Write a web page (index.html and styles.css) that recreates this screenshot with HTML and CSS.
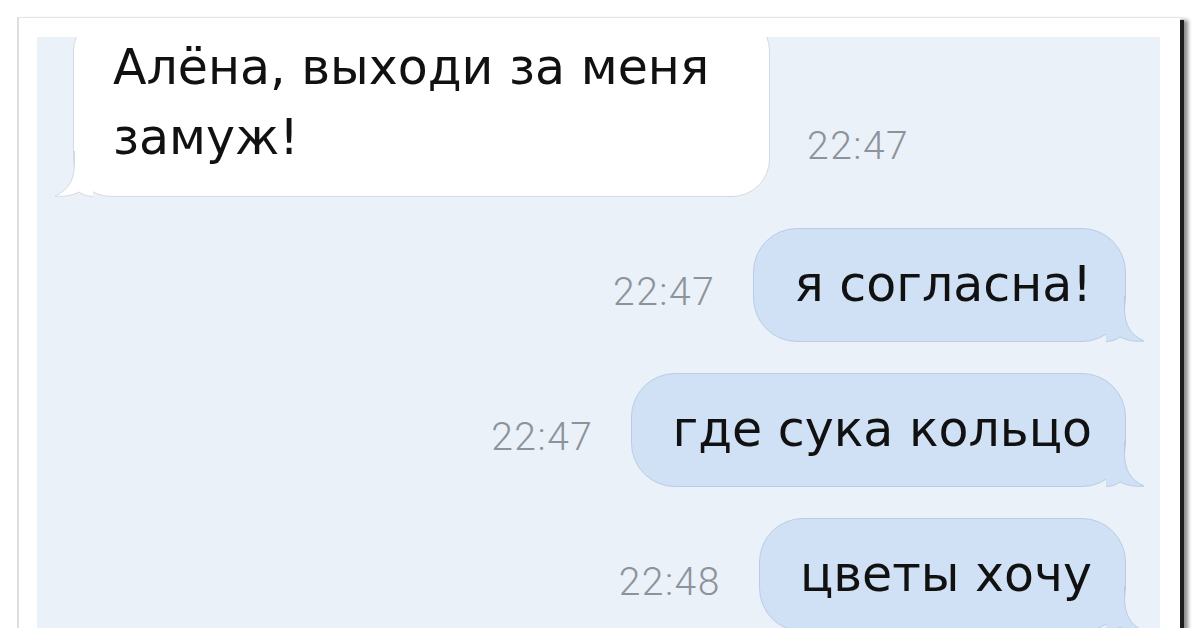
FILE: index.html
```html
<!DOCTYPE html>
<html lang="ru">
<head>
    <meta charset="UTF-8">
    <title>Переписка</title>
    <link rel="stylesheet" href="styles.css">
</head>
<body>
    <div class="frame">
        <div class="chat">
            <div class="row row-in">
                <div class="bubble bubble-in">
                    Алёна, выходи за меня замуж!
                    <svg class="tail tail-in" width="40" height="46" viewBox="0 0 40 46">
                        <path class="tail-fill" d="M0 0H18.5V12C18.5 28 24 39 38 45C29 46 21 44.5 14 41C10 44 5 45.5 0 45.5Z"/>
                        <path class="tail-line" d="M18.5 0V12C18.5 28 24 39 38 45C29 46 21 44.5 14 41C10 44 5 45.5 0 45.5"/>
                    </svg>
                </div>
                <span class="time">22:47</span>
            </div>
            <div class="row row-out">
                <span class="time">22:47</span>
                <div class="bubble bubble-out">
                    я согласна!
                    <svg class="tail tail-out" width="40" height="46" viewBox="0 0 40 46">
                        <path class="tail-fill" d="M0 0H18.5V12C18.5 28 24 39 38 45C29 46 21 44.5 14 41C10 44 5 45.5 0 45.5Z"/>
                        <path class="tail-line" d="M18.5 0V12C18.5 28 24 39 38 45C29 46 21 44.5 14 41C10 44 5 45.5 0 45.5"/>
                    </svg>
                </div>
            </div>
            <div class="row row-out">
                <span class="time">22:47</span>
                <div class="bubble bubble-out">
                    где сука кольцо
                    <svg class="tail tail-out" width="40" height="46" viewBox="0 0 40 46">
                        <path class="tail-fill" d="M0 0H18.5V12C18.5 28 24 39 38 45C29 46 21 44.5 14 41C10 44 5 45.5 0 45.5Z"/>
                        <path class="tail-line" d="M18.5 0V12C18.5 28 24 39 38 45C29 46 21 44.5 14 41C10 44 5 45.5 0 45.5"/>
                    </svg>
                </div>
            </div>
            <div class="row row-out">
                <span class="time">22:48</span>
                <div class="bubble bubble-out">
                    цветы хочу
                    <svg class="tail tail-out" width="40" height="46" viewBox="0 0 40 46">
                        <path class="tail-fill" d="M0 0H18.5V12C18.5 28 24 39 38 45C29 46 21 44.5 14 41C10 44 5 45.5 0 45.5Z"/>
                        <path class="tail-line" d="M18.5 0V12C18.5 28 24 39 38 45C29 46 21 44.5 14 41C10 44 5 45.5 0 45.5"/>
                    </svg>
                </div>
            </div>
        </div>
    </div>
</body>
</html>
```
FILE: styles.css
```css
:root {
    --panel-color: #ebf1f9;
    --out-color: #d0e1f6;
    --out-border: #b9cce4;
    --in-border: #d5dae2;
    --time-color: #8d939a;
    --text-color: #111;
}
html, body { height: 100%; overflow: hidden; }
body {
    margin: 0;
    background: #fff;
    font-family: 'DejaVu Sans', 'Liberation Sans', Arial, sans-serif;
    color: var(--text-color);
}
.frame {
    margin: 17px 0 0 17px;
    width: 1163px;
    height: 640px;
    box-sizing: border-box;
    background: #fff;
    border-left: 2px solid #dedede;
    border-top: 1px solid #e4e4e4;
    padding: 19px 20px 0 18px;
    box-shadow: 4px 3px 0 #1e1e1e, 8px 3px 4px rgba(0, 0, 0, 0.45);
}
.chat {
    height: 100%;
    background: var(--panel-color);
    overflow: hidden;
    display: flex;
    flex-direction: column;
    gap: 31px;
    padding: 0 34px 0 36px;
}
.row { display: flex; align-items: flex-end; }
.row-in { margin-top: -24px; gap: 37px; }
.row-out { justify-content: flex-end; gap: 38px; }
.bubble {
    position: relative;
    font-size: 49px;
    line-height: 58px;
    white-space: nowrap;
}
.bubble-in {
    width: 697px;
    box-sizing: border-box;
    white-space: normal;
    line-height: 70px;
    padding: 19px 28px 23px 39px;
    background: #fff;
    border: 1px solid var(--in-border);
    border-radius: 38px;
}
.bubble-out {
    padding: 27px 33px 27px 40px;
    background: var(--out-color);
    border: 1px solid var(--out-border);
    border-radius: 44px;
}
.time {
    font-family: Roboto, 'Liberation Sans', Arial, sans-serif;
    font-size: 39px;
    line-height: 39px;
    font-weight: 300;
    letter-spacing: 1.5px;
    color: var(--time-color);
}
.row-in .time { margin-bottom: 31px; }
.row-out .time { margin-bottom: 30px; }
.tail { position: absolute; bottom: -1px; }
.tail-out { right: -21px; }
.tail-in { left: -21px; transform: scaleX(-1); }
.tail-line { fill: none; stroke-width: 1; }
.tail-out .tail-fill { fill: var(--out-color); }
.tail-out .tail-line { stroke: var(--out-border); }
.tail-in .tail-fill { fill: #fff; }
.tail-in .tail-line { stroke: var(--in-border); }
```
